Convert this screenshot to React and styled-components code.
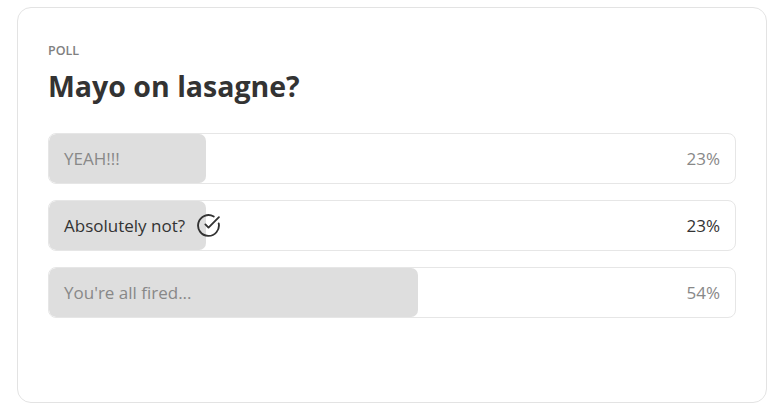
import React from 'react';
import styled, { createGlobalStyle } from 'styled-components';
import { CircleCheckBig } from 'lucide-react';

const GlobalStyle = createGlobalStyle`
  body {
    margin: 0;
    background: #ffffff;
    font-family: 'Open Sans', 'Noto Sans', sans-serif;
  }
`;

const Card = styled.div`
  box-sizing: border-box;
  width: 750px;
  height: 396px;
  margin: 7px 0 0 17px;
  padding: 35px 30px 0 30px;
  border: 1px solid #e3e3e3;
  border-radius: 14px;
  background: #fff;
`;

const Label = styled.div`
  font-size: 12.5px;
  font-weight: 600;
  color: #808080;
  line-height: 16px;
`;

const Title = styled.h2`
  margin: 7px 0 0 0;
  font-size: 28.5px;
  font-weight: 700;
  color: #333;
  line-height: 40px;
`;

const Options = styled.div`
  margin-top: 27px;
  display: flex;
  flex-direction: column;
  gap: 16px;
`;

const Row = styled.div`
  position: relative;
  box-sizing: border-box;
  height: 51px;
  border: 1px solid #e6e6e6;
  border-radius: 8px;
  overflow: hidden;
  display: flex;
  align-items: center;
  justify-content: space-between;
  padding: 0 15px;
  font-size: 17px;
  color: ${p => (p.$chosen ? '#333' : '#888')};
`;

const Fill = styled.div`
  position: absolute;
  left: 0;
  top: 0;
  bottom: 0;
  background: #dedede;
  border-radius: 7px;
`;

const Text = styled.span`
  position: relative;
  display: flex;
  align-items: center;
  gap: 11px;
`;

const Percent = styled.span`
  position: relative;
`;

const options = [
  { text: 'YEAH!!!', pct: 23 },
  { text: 'Absolutely not?', pct: 23, chosen: true },
  { text: "You're all fired...", pct: 54 },
];

export default function App() {
  return (
    <>
      <GlobalStyle />
      <Card>
        <Label>POLL</Label>
        <Title>Mayo on lasagne?</Title>
        <Options>
          {options.map((o, i) => (
            <Row key={i} $chosen={o.chosen}>
              <Fill style={{ width: `calc(${o.pct}% - 1px)` }} />
              <Text>
                {o.text}
                {o.chosen && <CircleCheckBig size={25} strokeWidth={1.8} color="#333" />}
              </Text>
              <Percent>{o.pct}%</Percent>
            </Row>
          ))}
        </Options>
      </Card>
    </>
  );
}
